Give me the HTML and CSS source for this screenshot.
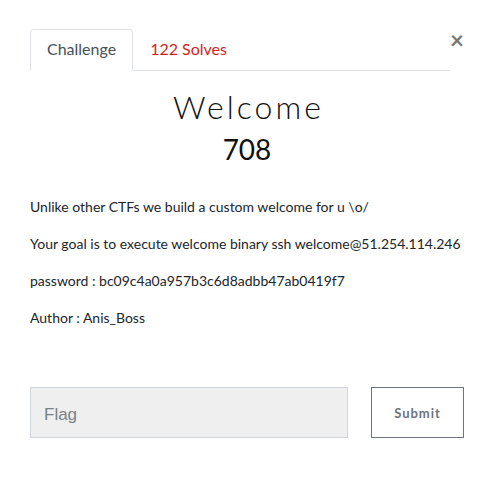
FILE: index.html
```html
<!DOCTYPE html>
<html>
<head>
<meta charset="utf-8">
<link rel="stylesheet" href="styles.css">
</head>
<body>
<div class="modal">
  <div class="header">
    <ul class="tabs">
      <li class="tab active">Challenge</li>
      <li class="tab solves">122 Solves</li>
    </ul>
    <button class="close" type="button">×</button>
  </div>
  <h2 class="name">Welcome</h2>
  <h3 class="value">708</h3>
  <div class="desc">
    <p>Unlike other CTFs we build a custom welcome for u \o/</p>
    <p>Your goal is to execute welcome binary ssh welcome@51.254.114.246</p>
    <p>password : bc09c4a0a957b3c6d8adbb47ab0419f7</p>
    <p>Author : Anis_Boss</p>
  </div>
  <form class="flag-row">
    <input class="flag" type="text" placeholder="Flag">
    <button class="submit" type="button">Submit</button>
  </form>
</div>
</body>
</html>
```
FILE: styles.css
```css
html, body {
  margin: 0;
  padding: 0;
  background: #fff;
}
body {
  font-family: Lato, "Noto Sans", sans-serif;
  color: #212529;
}
.modal {
  width: 434px;
  padding: 29px 30px 0;
}
.header {
  display: flex;
  align-items: flex-start;
}
.tabs {
  flex: 1;
  display: flex;
  list-style: none;
  margin: 0;
  padding: 0;
  border-bottom: 1px solid #dee2e6;
}
.tab {
  padding: 7px 16px 9px;
  font-size: 16px;
  line-height: 24px;
  border: 1px solid transparent;
  border-top-left-radius: 4px;
  border-top-right-radius: 4px;
  margin-bottom: -1px;
}
.tab.active {
  color: #495057;
  border-color: #dee2e6 #dee2e6 #fff;
  background: #fff;
}
.tab.solves {
  color: #d11f1f;
}
.close {
  border: 0;
  background: none;
  padding: 0;
  margin: 0;
  width: 14px;
  font-family: Lato, sans-serif;
  font-size: 24px;
  font-weight: 700;
  line-height: 20px;
  color: #777;
  display: flex;
  justify-content: center;
  margin-top: 1px;
}
.name {
  margin: 17px 0 0;
  padding-left: 3px;
  text-align: center;
  font-family: Lato, sans-serif;
  font-weight: 300;
  font-size: 32px;
  line-height: 38px;
  letter-spacing: 3px;
  color: #111;
}
.value {
  margin: 6px 0 0;
  text-align: center;
  font-size: 28px;
  font-weight: 400;
  line-height: 34px;
  color: #111;
}
.desc {
  margin-top: 30px;
  font-size: 14px;
  line-height: 21px;
  color: #212529;
}
.desc p {
  margin: 0 0 16px;
}
.flag-row {
  margin-top: 59px;
  display: grid;
  grid-template-columns: 318px 93px;
  column-gap: 23px;
}
.flag {
  box-sizing: border-box;
  height: 51px;
  background: #efefef;
  border: 1px solid #ced4da;
  padding: 4px 13px 0;
  font-family: "Liberation Sans", Arial, sans-serif;
  font-size: 17px;
  color: #495057;
}
.flag::placeholder {
  color: #7b8086;
}
.submit {
  box-sizing: border-box;
  height: 51px;
  background: #fff;
  border: 1px solid #6c757d;
  font-family: Lato, sans-serif;
  font-weight: 700;
  font-size: 13px;
  letter-spacing: 1px;
  color: #6c757d;
}
```
